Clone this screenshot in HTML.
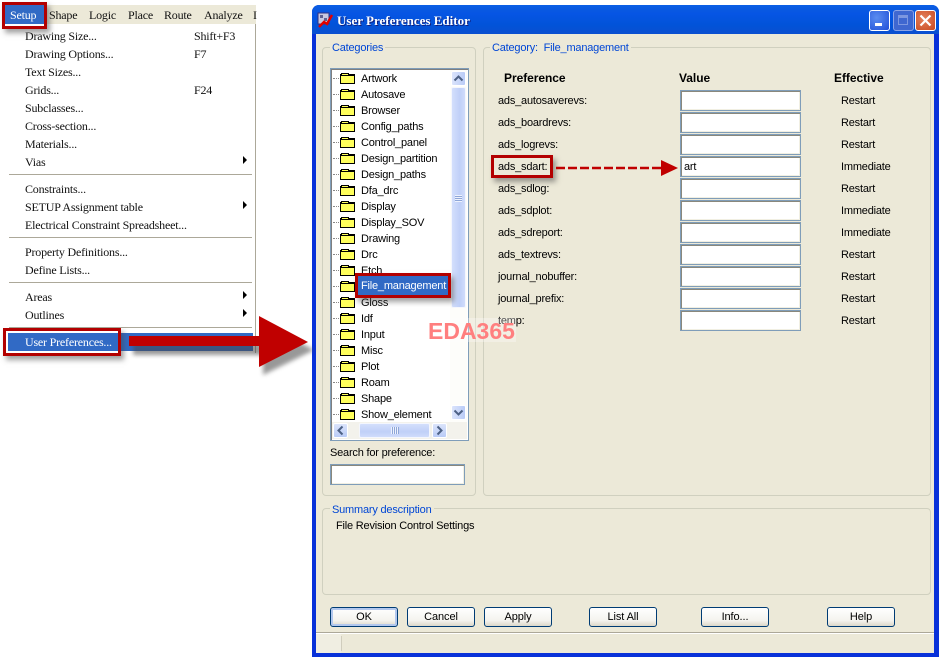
<!DOCTYPE html>
<html><head><meta charset="utf-8">
<style>
html,body{margin:0;padding:0;background:#fff;}
#p{position:relative;width:944px;height:658px;overflow:hidden;background:#fff;font-family:"Liberation Sans",sans-serif;font-size:11px;letter-spacing:-.2px;color:#000;}
#p div,#p span{position:absolute;}
.t{white-space:nowrap;line-height:14px;height:14px;margin-top:1px;}
.h{font-weight:bold;font-size:12px;letter-spacing:-.05px;}
.s{font-family:"Liberation Serif",serif;font-size:12px;letter-spacing:-.2px;color:#111;white-space:nowrap;line-height:14px;height:14px;}
.sep{left:9px;width:243px;height:1px;background:#aca899;border-bottom:1px solid #fff;}
.arr{width:0;height:0;border-left:4px solid #000;border-top:4px solid transparent;border-bottom:4px solid transparent;left:243px;}
.fo{left:340px;width:15px;height:10px;background:#ffff5c;border:1px solid #000;box-sizing:border-box;border-top-width:2px;}
.fo:before{content:"";position:absolute;left:0;top:-3px;width:6px;height:1px;background:#ffff5c;border:1px solid #000;border-bottom:0;box-sizing:content-box;}
.dot{left:333px;width:6px;height:0;border-top:1px dotted #888;}
.inp{left:680px;width:121px;height:21px;box-sizing:border-box;background:#fff;border:1px solid #7f9db9;box-shadow:inset 1px 1px 0 #8a887c,inset -1px -1px 0 #f1efe2;}
.gb{border:1px solid #d0d0bf;border-radius:4px;box-sizing:border-box;}
.lg{background:#ece9d8;color:#0046d5;white-space:nowrap;line-height:14px;height:14px;padding:0 2px;font-size:11px;margin-top:1px;}
.b{height:20px;top:607px;box-sizing:border-box;background:linear-gradient(#fff,#f4f3ee 70%,#dcd8c8);border:1px solid #003c74;border-radius:3px;text-align:center;line-height:18px;font-size:11px;letter-spacing:-.1px;}
.red{border:3px solid #b30000;box-sizing:border-box;box-shadow:3px 4px 5px rgba(70,70,70,.5);}
.wb{top:10px;width:21px;height:21px;box-sizing:border-box;border:1px solid #fff;border-radius:3px;}
</style></head><body>
<div id="p">
<!-- Menu -->
<div style="left:5px;top:5px;width:251px;height:19px;background:#ece9d8;"></div>
<div style="left:255px;top:24px;width:1px;height:329px;background:#aca899;"></div>
<div style="left:5px;top:5px;width:40px;height:19px;background:#316ac5;"></div>
<div class="s" style="left:10px;top:8px;color:#fff;">Setup</div>
<div class="s" style="left:49px;top:8px;">Shape</div>
<div class="s" style="left:89px;top:8px;">Logic</div>
<div class="s" style="left:128px;top:8px;">Place</div>
<div class="s" style="left:164px;top:8px;">Route</div>
<div class="s" style="left:204px;top:8px;">Analyze</div>
<div class="s" style="left:253px;top:8px;">I</div>
<div class="s" style="left:25px;top:29px;">Drawing Size...</div><div class="s" style="left:194px;top:29px;">Shift+F3</div>
<div class="s" style="left:25px;top:47px;">Drawing Options...</div><div class="s" style="left:194px;top:47px;">F7</div>
<div class="s" style="left:25px;top:65px;">Text Sizes...</div>
<div class="s" style="left:25px;top:83px;">Grids...</div><div class="s" style="left:194px;top:83px;">F24</div>
<div class="s" style="left:25px;top:101px;">Subclasses...</div>
<div class="s" style="left:25px;top:119px;">Cross-section...</div>
<div class="s" style="left:25px;top:137px;">Materials...</div>
<div class="s" style="left:25px;top:155px;">Vias</div><div class="arr" style="top:156px;"></div>
<div class="sep" style="top:174px;"></div>
<div class="s" style="left:25px;top:182px;">Constraints...</div>
<div class="s" style="left:25px;top:200px;">SETUP Assignment table</div><div class="arr" style="top:201px;"></div>
<div class="s" style="left:25px;top:218px;">Electrical Constraint Spreadsheet...</div>
<div class="sep" style="top:237px;"></div>
<div class="s" style="left:25px;top:245px;">Property Definitions...</div>
<div class="s" style="left:25px;top:263px;">Define Lists...</div>
<div class="sep" style="top:282px;"></div>
<div class="s" style="left:25px;top:290px;">Areas</div><div class="arr" style="top:291px;"></div>
<div class="s" style="left:25px;top:308px;">Outlines</div><div class="arr" style="top:309px;"></div>
<div class="sep" style="top:327px;"></div>
<div style="left:8px;top:333px;width:245px;height:18px;background:#316ac5;"></div>
<div class="s" style="left:25px;top:335px;color:#fff;">User Preferences...</div>

<!-- Window -->
<div style="left:312px;top:5px;width:627px;height:652px;background:#0831d9;border-radius:7px 7px 0 0;"></div>
<div style="left:312px;top:5px;width:627px;height:29px;border-radius:7px 7px 0 0;background:linear-gradient(#0a5fe6,#0a5ae0 12%,#0655e4 30%,#0253d8 70%,#0a4fd0);"></div>
<div style="left:316px;top:34px;width:618px;height:619px;background:#ece9d8;"></div>
<svg style="position:absolute;left:317px;top:12px;" width="16" height="16" viewBox="0 0 16 16"><rect x="1" y="1" width="11" height="11" fill="#c8c8e0" stroke="#303080"/><rect x="3" y="3" width="3" height="3" fill="#606090"/><rect x="7" y="6" width="3" height="3" fill="#606090"/><path d="M2 15L7 10L10 12L15 3" stroke="#e00000" stroke-width="2.5" fill="none"/></svg>
<div class="s" style="left:337px;top:14px;color:#fff;font-weight:bold;font-size:13px;letter-spacing:0;text-shadow:1px 1px 0 #0f1f7f;">User Preferences Editor</div>
<div class="wb" style="left:869px;background:radial-gradient(circle at 35% 35%,#5a8cf0,#2050d8);"><span style="left:5px;top:12px;width:7px;height:3px;background:#fff;"></span></div>
<div class="wb" style="left:893px;background:#3f67d0;border-color:#8aa3e6;"><span style="left:4px;top:4px;width:10px;height:10px;border:1px solid #7d97e0;border-top-width:3px;box-sizing:border-box;"></span></div>
<div class="wb" style="left:915px;background:radial-gradient(circle at 40% 40%,#e4805c,#c84a20);"><svg style="position:absolute;left:3px;top:3px;" width="13" height="13"><path d="M1.5 1.5L11.5 11.5M11.5 1.5L1.5 11.5" stroke="#fff" stroke-width="2.2"/></svg></div>

<!-- Group boxes -->
<div class="gb" style="left:322px;top:47px;width:154px;height:449px;"></div>
<div class="lg" style="left:330px;top:40px;">Categories</div>
<div class="gb" style="left:483px;top:47px;width:448px;height:449px;"></div>
<div class="lg" style="left:490px;top:40px;">Category:&nbsp; File_management</div>
<div class="gb" style="left:322px;top:508px;width:609px;height:87px;"></div>
<div class="lg" style="left:330px;top:502px;">Summary description</div>
<div class="t" style="left:336px;top:518px;">File Revision Control Settings</div>

<!-- Tree -->
<div style="left:330px;top:68px;width:139px;height:373px;background:#fff;border:1px solid #7f9db9;box-sizing:border-box;box-shadow:inset 1px 1px 0 #7f7f7f;"></div>
<div class="dot" style="top:78px"></div><div class="fo" style="top:74px"></div><div class="t" style="left:361px;top:71px">Artwork</div>
<div class="dot" style="top:94px"></div><div class="fo" style="top:90px"></div><div class="t" style="left:361px;top:87px">Autosave</div>
<div class="dot" style="top:110px"></div><div class="fo" style="top:106px"></div><div class="t" style="left:361px;top:103px">Browser</div>
<div class="dot" style="top:126px"></div><div class="fo" style="top:122px"></div><div class="t" style="left:361px;top:119px">Config_paths</div>
<div class="dot" style="top:142px"></div><div class="fo" style="top:138px"></div><div class="t" style="left:361px;top:135px">Control_panel</div>
<div class="dot" style="top:158px"></div><div class="fo" style="top:154px"></div><div class="t" style="left:361px;top:151px">Design_partition</div>
<div class="dot" style="top:174px"></div><div class="fo" style="top:170px"></div><div class="t" style="left:361px;top:167px">Design_paths</div>
<div class="dot" style="top:190px"></div><div class="fo" style="top:186px"></div><div class="t" style="left:361px;top:183px">Dfa_drc</div>
<div class="dot" style="top:206px"></div><div class="fo" style="top:202px"></div><div class="t" style="left:361px;top:199px">Display</div>
<div class="dot" style="top:222px"></div><div class="fo" style="top:218px"></div><div class="t" style="left:361px;top:215px">Display_SOV</div>
<div class="dot" style="top:238px"></div><div class="fo" style="top:234px"></div><div class="t" style="left:361px;top:231px">Drawing</div>
<div class="dot" style="top:254px"></div><div class="fo" style="top:250px"></div><div class="t" style="left:361px;top:247px">Drc</div>
<div class="dot" style="top:270px"></div><div class="fo" style="top:266px"></div><div class="t" style="left:361px;top:263px">Etch</div>
<div class="dot" style="top:286px"></div><div class="fo" style="top:282px"></div>
<div class="dot" style="top:302px"></div><div class="fo" style="top:298px"></div><div class="t" style="left:361px;top:295px">Gloss</div>
<div class="dot" style="top:318px"></div><div class="fo" style="top:314px"></div><div class="t" style="left:361px;top:311px">Idf</div>
<div class="dot" style="top:334px"></div><div class="fo" style="top:330px"></div><div class="t" style="left:361px;top:327px">Input</div>
<div class="dot" style="top:350px"></div><div class="fo" style="top:346px"></div><div class="t" style="left:361px;top:343px">Misc</div>
<div class="dot" style="top:366px"></div><div class="fo" style="top:362px"></div><div class="t" style="left:361px;top:359px">Plot</div>
<div class="dot" style="top:382px"></div><div class="fo" style="top:378px"></div><div class="t" style="left:361px;top:375px">Roam</div>
<div class="dot" style="top:398px"></div><div class="fo" style="top:394px"></div><div class="t" style="left:361px;top:391px">Shape</div>
<div class="dot" style="top:414px"></div><div class="fo" style="top:410px"></div><div class="t" style="left:361px;top:407px">Show_element</div>
<!-- Scrollbars -->
<div style="left:450px;top:70px;width:17px;height:352px;background:#fdfdfa;"></div>
<div style="left:451px;top:71px;width:15px;height:15px;background:linear-gradient(90deg,#dbe4fb,#b9cbf7);border:1px solid #fff;border-radius:2px;box-sizing:border-box;"></div>
<svg style="position:absolute;left:451px;top:71px;" width="15" height="15"><path d="M3.5 9.5L7.5 5.5L11.5 9.5" stroke="#4d6185" stroke-width="2" fill="none"/></svg>
<div style="left:451px;top:87px;width:15px;height:221px;background:linear-gradient(90deg,#d3dffc,#c0d0f8 60%,#d0dcfb);border:1px solid #f4f6fd;border-radius:2px;box-sizing:border-box;"></div>
<div style="left:455px;top:195px;width:7px;height:7px;background:repeating-linear-gradient(#eef2fd 0 1px,#8ea6d8 1px 2px);"></div>
<div style="left:451px;top:405px;width:15px;height:15px;background:linear-gradient(90deg,#dbe4fb,#b9cbf7);border:1px solid #fff;border-radius:2px;box-sizing:border-box;"></div>
<svg style="position:absolute;left:451px;top:405px;" width="15" height="15"><path d="M3.5 5.5L7.5 9.5L11.5 5.5" stroke="#4d6185" stroke-width="2" fill="none"/></svg>
<div style="left:332px;top:422px;width:135px;height:17px;background:#f3f2ec;"></div>
<div style="left:333px;top:423px;width:15px;height:15px;background:linear-gradient(#dbe4fb,#b9cbf7);border:1px solid #fff;border-radius:2px;box-sizing:border-box;"></div>
<svg style="position:absolute;left:333px;top:423px;" width="15" height="15"><path d="M9.5 3.5L5.5 7.5L9.5 11.5" stroke="#4d6185" stroke-width="2" fill="none"/></svg>
<div style="left:359px;top:423px;width:71px;height:15px;background:linear-gradient(#d3dffc,#c0d0f8 60%,#d0dcfb);border:1px solid #f4f6fd;border-radius:2px;box-sizing:border-box;"></div>
<div style="left:391px;top:427px;width:8px;height:7px;background:repeating-linear-gradient(90deg,#eef2fd 0 1px,#8ea6d8 1px 2px);"></div>
<div style="left:432px;top:423px;width:15px;height:15px;background:linear-gradient(#dbe4fb,#b9cbf7);border:1px solid #fff;border-radius:2px;box-sizing:border-box;"></div>
<svg style="position:absolute;left:432px;top:423px;" width="15" height="15"><path d="M5.5 3.5L9.5 7.5L5.5 11.5" stroke="#4d6185" stroke-width="2" fill="none"/></svg>
<div class="t" style="left:330px;top:445px;">Search for preference:</div>
<div style="left:330px;top:464px;width:135px;height:21px;box-sizing:border-box;background:#fff;border:1px solid #7f9db9;box-shadow:inset 1px 1px 0 #8a887c,inset -1px -1px 0 #f1efe2;"></div>

<!-- Prefs -->
<div class="t h" style="left:504px;top:70px;">Preference</div>
<div class="t h" style="left:679px;top:70px;">Value</div>
<div class="t h" style="left:834px;top:70px;">Effective</div>
<div class="t" style="left:498px;top:93px;">ads_autosaverevs:</div><div class="inp" style="top:90px;"></div><div class="t" style="left:841px;top:93px;">Restart</div>
<div class="t" style="left:498px;top:115px;">ads_boardrevs:</div><div class="inp" style="top:112px;"></div><div class="t" style="left:841px;top:115px;">Restart</div>
<div class="t" style="left:498px;top:137px;">ads_logrevs:</div><div class="inp" style="top:134px;"></div><div class="t" style="left:841px;top:137px;">Restart</div>
<div class="t" style="left:498px;top:159px;">ads_sdart:</div><div class="inp" style="top:156px;"></div><div class="t" style="left:684px;top:159px;">art</div><div class="t" style="left:841px;top:159px;">Immediate</div>
<div class="t" style="left:498px;top:181px;">ads_sdlog:</div><div class="inp" style="top:178px;"></div><div class="t" style="left:841px;top:181px;">Restart</div>
<div class="t" style="left:498px;top:203px;">ads_sdplot:</div><div class="inp" style="top:200px;"></div><div class="t" style="left:841px;top:203px;">Immediate</div>
<div class="t" style="left:498px;top:225px;">ads_sdreport:</div><div class="inp" style="top:222px;"></div><div class="t" style="left:841px;top:225px;">Immediate</div>
<div class="t" style="left:498px;top:247px;">ads_textrevs:</div><div class="inp" style="top:244px;"></div><div class="t" style="left:841px;top:247px;">Restart</div>
<div class="t" style="left:498px;top:269px;">journal_nobuffer:</div><div class="inp" style="top:266px;"></div><div class="t" style="left:841px;top:269px;">Restart</div>
<div class="t" style="left:498px;top:291px;">journal_prefix:</div><div class="inp" style="top:288px;"></div><div class="t" style="left:841px;top:291px;">Restart</div>
<div class="t" style="left:498px;top:313px;">temp:</div><div class="inp" style="top:310px;"></div><div class="t" style="left:841px;top:313px;">Restart</div>

<!-- Buttons -->
<div class="b" style="left:330px;width:68px;box-shadow:inset 0 0 0 2px #b3c8ee;">OK</div>
<div class="b" style="left:407px;width:68px;">Cancel</div>
<div class="b" style="left:484px;width:68px;">Apply</div>
<div class="b" style="left:589px;width:68px;">List All</div>
<div class="b" style="left:701px;width:68px;">Info...</div>
<div class="b" style="left:827px;width:68px;">Help</div>
<div style="left:316px;top:632px;width:618px;height:1px;background:#aca899;"></div>
<div style="left:316px;top:633px;width:618px;height:1px;background:#fff;"></div>
<div style="left:316px;top:634px;width:25px;height:19px;background:#f0eee2;"></div>
<div style="left:341px;top:636px;width:1px;height:15px;background:#d0cdbd;"></div>

<!-- EDA365 watermark -->
<div style="left:428px;top:318px;width:88px;height:24px;background:rgba(255,255,255,.3);"></div>
<div class="t" style="left:428px;top:318px;height:24px;line-height:24px;font-weight:bold;font-size:23px;letter-spacing:0;color:#ff7f7f;">EDA365</div>

<!-- Highlights -->
<div class="red" style="left:2px;top:2px;width:45px;height:27px;background:transparent;"></div>
<div class="red" style="left:3px;top:328px;width:118px;height:28px;"></div>
<div class="red" style="left:491px;top:155px;width:62px;height:23px;"></div>
<div style="left:355px;top:273px;width:96px;height:25px;background:#fff;"></div>
<div style="left:358px;top:276px;width:90px;height:19px;background:#316ac5;"></div>
<div class="t" style="left:361px;top:278px;color:#fff;">File_management</div>
<div class="red" style="left:355px;top:273px;width:96px;height:25px;"></div>

<!-- Arrows -->
<svg style="position:absolute;left:0;top:0;" width="944" height="658">
<defs><filter id="sh" x="-20%" y="-40%" width="150%" height="190%"><feGaussianBlur stdDeviation="2"/></filter></defs>
<path d="M129 338H259V318L310 345L259 370V350H129Z" fill="#444" opacity=".55" filter="url(#sh)" transform="translate(4,5)"/>
<path d="M129 336H259V316L308 342L259 367V346H129Z" fill="#c00000"/>
<path d="M556 171H664" stroke="#555" stroke-width="3" stroke-dasharray="9 3" opacity=".45" filter="url(#sh)"/>
<path d="M556 168H664" stroke="#c00000" stroke-width="2.5" stroke-dasharray="9 3"/>
<path d="M661 160L678 168L661 176Z" fill="#c00000"/>
</svg>
</div>
</body></html>
